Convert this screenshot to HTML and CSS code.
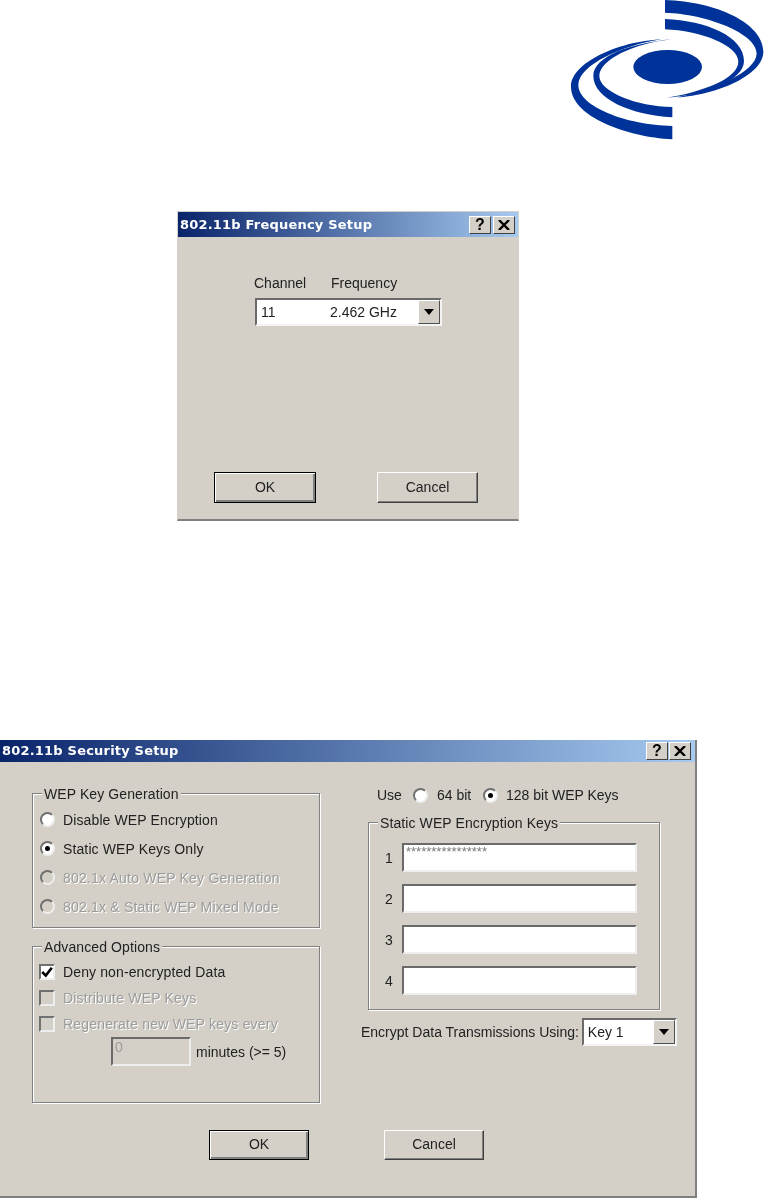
FILE: index.html
```html
<!DOCTYPE html>
<html lang="en">
<head>
<meta charset="utf-8">
<title>802.11b Setup</title>
<link rel="stylesheet" href="styles.css">
</head>
<body>
<div class="page">
  <header class="logo-row">
    <svg class="logo" viewBox="0 0 612 450" width="204" height="150" aria-hidden="true">
      <ellipse cx="323" cy="201" rx="103" ry="51"/>
      <path d="M315 0C470 5 610 70 610 155C610 225 470 285 352 292C460 272 590 215 590 160C590 100 440 42 315 38Z"/>
      <path d="M315 57C440 62 552 110 552 183C552 240 440 285 320 293C430 275 535 235 535 185C535 135 420 92 315 88Z"/>
      <path d="M337 418C200 410 33 350 33 260C33 190 170 125 305 118C190 135 55 195 55 255C55 320 200 375 337 378Z"/>
      <path d="M337 352C210 345 100 295 100 228C100 170 210 130 335 118C220 130 118 180 118 228C118 275 230 320 337 321Z"/>
    </svg>
  </header>

  <section class="dialog freq">
    <div class="titlebar">
      <span class="title">802.11b Frequency Setup</span>
      <span class="tbtn">?</span>
      <span class="tbtn"><svg viewBox="0 0 12 10" width="12" height="10"><path d="M1 0L11 10M11 0L1 10" stroke="#000" stroke-width="2.400" fill="none"/></svg></span>
    </div>
    <div class="freq-body">
      <div class="freq-labels"><span class="lab-channel">Channel</span><span>Frequency</span></div>
      <div class="combo combo-freq">
        <span class="val-channel">11</span><span class="val-freq">2.462 GHz</span>
        <span class="arrow"><i></i></span>
      </div>
      <div class="footer freq-footer">
        <button class="btn default">OK</button>
        <button class="btn">Cancel</button>
      </div>
    </div>
  </section>

  <section class="dialog security">
    <div class="titlebar">
      <span class="title">802.11b Security Setup</span>
      <span class="tbtn">?</span>
      <span class="tbtn"><svg viewBox="0 0 12 10" width="12" height="10"><path d="M1 0L11 10M11 0L1 10" stroke="#000" stroke-width="2.400" fill="none"/></svg></span>
    </div>
    <div class="columns">
      <div class="col-left">
        <div class="group">
          <div class="group-title">WEP Key Generation</div>
          <div class="radio-list">
            <div class="row-29"><span class="radio"></span>Disable WEP Encryption</div>
            <div class="row-29"><span class="radio on"></span>Static WEP Keys Only</div>
            <div class="row-29 off"><span class="radio"></span>802.1x Auto WEP Key Generation</div>
            <div class="row-29 off"><span class="radio"></span>802.1x &amp; Static WEP Mixed Mode</div>
          </div>
        </div>
        <div class="group advanced">
          <div class="group-title">Advanced Options</div>
          <div class="check-list">
            <div class="row-26"><span class="check"><svg viewBox="0 0 10 10" width="12" height="12"><path d="M1 5L4 8L9 1.500" stroke="#000" stroke-width="2.200" fill="none"/></svg></span>Deny non-encrypted Data</div>
            <div class="row-26 off"><span class="check"></span>Distribute WEP Keys</div>
            <div class="row-26 off"><span class="check"></span>Regenerate new WEP keys every</div>
          </div>
          <div class="minutes"><span class="field field-minutes">0</span><span>minutes (&gt;= 5)</span></div>
        </div>
      </div>
      <div class="col-right">
        <div class="use-row">
          <span class="use-word">Use</span>
          <span class="radio"></span><span class="use-64">64 bit</span>
          <span class="radio on"></span><span class="use-128">128 bit WEP Keys</span>
        </div>
        <div class="group keys">
          <div class="group-title">Static WEP Encryption Keys</div>
          <div class="key-list">
            <div class="key-row"><span class="key-no">1</span><span class="field field-key"><span class="stars">****************</span></span></div>
            <div class="key-row"><span class="key-no">2</span><span class="field field-key"></span></div>
            <div class="key-row"><span class="key-no">3</span><span class="field field-key"></span></div>
            <div class="key-row"><span class="key-no">4</span><span class="field field-key"></span></div>
          </div>
        </div>
        <div class="encrypt-row">
          <span>Encrypt Data Transmissions Using:</span>
          <div class="combo combo-key"><span class="val-key">Key 1</span><span class="arrow"><i></i></span></div>
        </div>
      </div>
    </div>
    <div class="footer security-footer">
      <button class="btn default">OK</button>
      <button class="btn">Cancel</button>
    </div>
  </section>
</div>
</body>
</html>
```

FILE: styles.css
```css
* { box-sizing: border-box; }
html, body { margin: 0; padding: 0; background: #fff; }
body { font: 14px/16px "Liberation Sans", Arial, sans-serif; color: #222; }
.page { width: 764px; height: 1198px; overflow: hidden; }

.logo-row { height: 150px; padding-left: 560px; }
.logo { display: block; fill: #003399; }

.dialog { background: #d4d0c8; display: flex; flex-direction: column; filter: blur(0.4px); }
.freq { width: 342px; height: 310px; margin: 61px 0 0 177px; border: 1px solid #d4d0c8; border-bottom: 2px solid #808080; }
.security { width: 697px; height: 458px; margin-top: 219px; border-right: 2px solid #808080; border-bottom: 2px solid #808080; }

.titlebar { height: 25px; flex: none; display: flex; align-items: center; gap: 2px; padding: 0 3px 0 2px; background: linear-gradient(90deg, #0a246a, #a6caf0); }
.security .titlebar { height: 22px; gap: 1px; padding-right: 4px; }
.title { flex: 1; color: #fff; font: bold 13px/16px "DejaVu Sans", sans-serif; letter-spacing: 0.2px; }
.tbtn { width: 22px; height: 18px; display: flex; align-items: center; justify-content: center; background: #d4d0c8; border: 1px solid; border-color: #fff #404040 #404040 #fff; font: bold 16px/16px "Liberation Sans", sans-serif; color: #000; }

.freq-body { flex: 1; display: flex; flex-direction: column; padding: 38px 0 16px 0; }
.freq-labels { padding-left: 76px; display: flex; }
.lab-channel { width: 77px; }
.combo { display: flex; align-items: center; background: #fff; border: 2px solid; border-color: #6a6a6a #f4f4f4 #f4f4f4 #6a6a6a; }
.combo-freq { width: 187px; height: 28px; margin: 7px 0 0 77px; padding: 0 0 0 4px; }
.val-channel { width: 69px; }
.val-freq { flex: 1; }
.arrow { width: 22px; align-self: stretch; display: flex; align-items: center; justify-content: center; background: #d4d0c8; border: 1px solid; border-color: #fff #505050 #505050 #fff; }
.arrow i { width: 0; height: 0; border: 5px solid transparent; border-top: 6px solid #000; border-bottom: 0; }
.footer { display: flex; }
.freq-footer { margin-top: auto; padding-left: 36px; gap: 61px; }
.freq-footer .default { width: 102px; }
.security-footer { margin-top: auto; padding: 0 0 36px 209px; gap: 75px; }
.security-footer .btn { width: 100px; height: 30px; padding-bottom: 2px; }
.btn { width: 101px; height: 31px; padding: 0 0 2px; background: #d4d0c8; border: 1px solid; border-color: #fff #404040 #404040 #fff; box-shadow: inset -1px -1px 0 #808080; font: 14px/16px "Liberation Sans", sans-serif; color: #222; }
.btn.default { border: 1px solid #000; box-shadow: inset 1px 1px 0 #fff, inset -2px -2px 0 #808080; }

.columns { display: flex; }
.col-left { width: 361px; padding: 31px 0 0 32px; display: flex; flex-direction: column; gap: 18px; }
.col-right { padding-top: 25px; }
.group { border: 1px solid #808080; box-shadow: 1px 1px 0 #fff, inset 1px 1px 0 #fff; }
.col-left .group { width: 288px; }
.group-title { width: fit-content; margin: -8px 0 0 9px; padding: 0 2px; background: #d4d0c8; height: 16px; letter-spacing: 0.1px; }
.radio-list { padding: 3px 0 6px 7px; }
.row-29, .row-26 { display: flex; align-items: center; gap: 8px; white-space: nowrap; letter-spacing: 0.12px; }
.row-29 { height: 29px; }
.row-26 { height: 26px; }
.off { color: #9c9c9c; text-shadow: 1px 1px 0 #fff; letter-spacing: 0.2px; }
.radio { flex: none; width: 15px; height: 15px; border-radius: 50%; background: #fff; border: 2px solid; border-color: #707070 #eeeeee #eeeeee #707070; display: inline-flex; align-items: center; justify-content: center; }
.radio.on::after { content: ""; width: 5px; height: 5px; border-radius: 50%; background: #000; }
.off .radio { background: #d4d0c8; }
.check-list { padding: 4px 0 0 6px; }
.check { flex: none; width: 16px; height: 16px; background: #fff; border: 2px solid; border-color: #707070 #eeeeee #eeeeee #707070; display: inline-flex; align-items: center; justify-content: center; }
.off .check { background: #d4d0c8; }
.minutes { display: flex; align-items: center; gap: 5px; padding: 0 0 36px 78px; }
.field { display: block; background: #fff; border: 2px solid; border-color: #6a6a6a #eeeeee #eeeeee #6a6a6a; }
.field-minutes { width: 80px; height: 29px; background: #d4d0c8; color: #9c9c9c; padding-left: 2px; }
.use-row { height: 16px; padding-left: 16px; display: flex; align-items: center; }
.use-word { width: 36px; }
.use-64 { margin-left: 9px; width: 46px; }
.use-128 { margin-left: 8px; }
.keys { width: 292px; margin: 19px 0 0 7px; }
.key-list { padding: 12px 0 14px 16px; display: flex; flex-direction: column; gap: 12px; }
.key-row { display: flex; align-items: center; }
.key-no { width: 17px; }
.field-key { width: 235px; height: 29px; overflow: hidden; padding-left: 2px; }
.stars { font-size: 13px; line-height: 13px; color: #777; display: block; }
.encrypt-row { display: flex; align-items: center; gap: 3px; margin-top: 8px; white-space: nowrap; }
.combo-key { width: 95px; height: 28px; padding-left: 4px; }
.val-key { flex: 1; }
```
